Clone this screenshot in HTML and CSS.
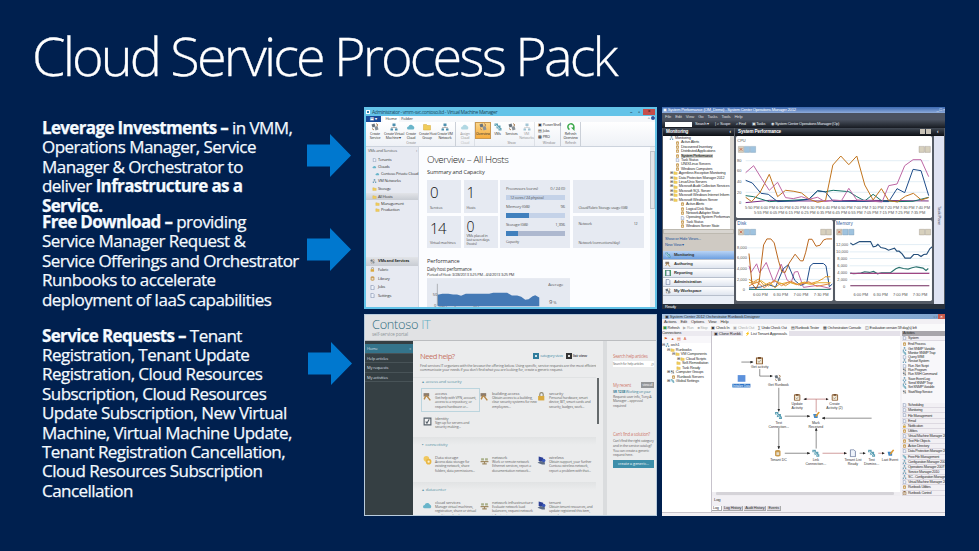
FILE: index.html
```
<!DOCTYPE html>
<html lang="en">
<head>
    <meta charset="UTF-8">
    <meta name="viewport" content="width=device-width, initial-scale=1.0">
    <title>Cloud Service Process Pack</title>
    <link rel="stylesheet" href="styles.css">
</head>
<body>
    <!-- shared icons -->
    <svg class="defs" width="0" height="0">
        <symbol id="servers" viewBox="0 0 16 16"><path d="M1 3l6-2 2 6-6 2z" fill="#68727c"/><path d="M7 8l6-2 2 7-6 2z" fill="#8b9298"/><path d="M10 1l4 3-3 2M2 11l4 3" stroke="#ad845a" stroke-width="2" fill="none"/></symbol>
        <symbol id="folder" viewBox="0 0 16 16"><path d="M1 3h6l1 2h7v9H1z" fill="#f0cc59" stroke="#d7a93a"/></symbol>
        <symbol id="cloud" viewBox="0 0 16 16"><path d="M3 13a3 3 0 0 1 0-6 5 5 0 0 1 9-1 4 4 0 0 1 1 7z" fill="#69b5ca"/></symbol>
        <symbol id="net" viewBox="0 0 16 16"><path d="M5 1h6v5H5zM1 11h5v4H1zM10 11h5v4h-5z" fill="#4c8fae"/><path d="M8 6v3M3 11V9h10v2" stroke="#777" fill="none"/></symbol>
        <symbol id="hub" viewBox="0 0 16 16"><path d="M1 10h14M8 10v4M4 14h8" stroke="#a08a62" stroke-width="2" fill="none"/><path d="M2 4h5v4H2zM9 4h5v4H9z" fill="#a9b08a"/></symbol>
        <symbol id="pc" viewBox="0 0 16 16"><path d="M3 1l8 2v7l-8-1z" fill="#2c3f96"/><path d="M1 12l5-3 8 2v4H9z" fill="#5d6c86"/><circle cx="12" cy="8" r="3" fill="#3a58b8"/></symbol>
        <symbol id="page" viewBox="0 0 16 16"><path d="M3 1h7l3 3v11H3z" fill="#eef3fb" stroke="#5f6f94" stroke-width="1.5"/></symbol>
        <symbol id="clip" viewBox="0 0 16 16"><path d="M2 3h12v12H2z" fill="#f4ead6" stroke="#86572a" stroke-width="2"/><path d="M5 1h6v4H5z" fill="#78512f"/><path d="M5 9l2 3 4-5" stroke="#666" fill="none"/></symbol>
        <symbol id="check" viewBox="0 0 16 16"><path d="M2 2h12v12H2z" fill="#f4f4f4" stroke="#56606a" stroke-width="2"/><path d="M5 8l2 3 4-7" stroke="#56606a" stroke-width="2" fill="none"/></symbol>
        <symbol id="db" viewBox="0 0 16 16"><path d="M2 3c2-3 10-3 12 0v10c-2 3-10 3-12 0z" fill="#c99b50"/><path d="M5 6h6v6H5z" fill="#e5dcca"/></symbol>
        <symbol id="disks" viewBox="0 0 16 16"><circle cx="6" cy="5" r="5" fill="#f0c860"/><circle cx="10" cy="10" r="5" fill="#e9b744"/><circle cx="10" cy="10" r="2" fill="#fbf0cf"/></symbol>
        <symbol id="refresh" viewBox="0 0 16 16"><path d="M5 13A6 6 0 1 1 12 12" fill="none" stroke="#39a849" stroke-width="3"/><path d="M8 9h7v7z" fill="#39a849"/></symbol>
        <symbol id="flow" viewBox="0 0 16 16"><path d="M1 1h7v5H1zM5 5h8v6H5zM9 10h6v5H9z" fill="#5b9fb4"/><path d="M3 3l9 10M3 9l3 4" stroke="#e4f1f4" stroke-width="1.5"/></symbol>
        <symbol id="magic" viewBox="0 0 16 16"><path d="M2 5h9v8H4z" fill="#4289c9"/><path d="M7 10l7-9" stroke="#e09b32" stroke-width="3"/></symbol>
        <symbol id="lock" viewBox="0 0 16 16"><path d="M5 7V4a3 3 0 0 1 6 0v3" fill="none" stroke="#8e876e" stroke-width="2"/><path d="M2 7h11v8H2z" fill="#d9a93e"/></symbol>
        <symbol id="key" viewBox="0 0 16 16"><path d="M1 2h10v6H1z" fill="#8c7c6c"/><path d="M6 6l7 9M5 7l-3 6" stroke="#b98a48" stroke-width="2.5"/></symbol>
        <symbol id="arrow" viewBox="0 0 44 43"><path d="M0 10.5h23V0l21 21.5L23 43V32.5H0z" fill="#0078cf"/></symbol>
    </svg>

    <div class="slide">
        <h1>Cloud Service Process Pack</h1>
        <div class="content">
            <div class="notes">
                <div class="note first">
                    <p><b>Leverage Investments –</b> in VMM,<br>Operations Manager, Service<br>Manager &amp; Orchestrator to<br>deliver <b>Infrastructure as a</b><br><b>Service.</b></p>
                    <svg class="arrow"><use href="#arrow"/></svg>
                </div>
                <div class="note second">
                    <p><b>Free Download –</b> providing<br>Service Manager Request &amp;<br>Service Offerings and Orchestrator<br>Runbooks to accelerate<br>deployment of IaaS capabilities</p>
                    <svg class="arrow"><use href="#arrow"/></svg>
                </div>
                <div class="note third">
                    <p><b>Service Requests –</b> Tenant<br>Registration, Tenant Update<br>Registration, Cloud Resources<br>Subscription, Cloud Resources<br>Update Subscription, New Virtual<br>Machine, Virtual Machine Update,<br>Tenant Registration Cancellation,<br>Cloud Resources Subscription<br>Cancellation</p>
                    <svg class="arrow"><use href="#arrow"/></svg>
                </div>
            </div>

            <div class="shots">
                <!-- Virtual Machine Manager -->
                <section class="shot vmm">
                    <div class="vmm-title"><i></i><span>Administrator - vmm-svc.contoso.ltd - Virtual Machine Manager</span><em>–</em><em>▫</em><em class="close">×</em></div>
                    <div class="vmm-tabs"><b>▤ ▾</b><span class="on">Home</span><span>Folder</span><em>^ <i></i></em></div>
                    <div class="ribbon">
                        <div class="tool w18"><svg><use href="#servers"/></svg>Create<br>Service</div>
                        <div class="tool w19"><svg><use href="#net"/></svg>Create Virtual<br>Machine ▾</div>
                        <div class="tool w16"><svg><use href="#cloud"/></svg>Create<br>Cloud<small>Create</small></div>
                        <div class="tool w16"><svg><use href="#folder"/></svg>Create Host<br>Group</div>
                        <div class="tool w21 end"><svg><use href="#net"/></svg>Create VM<br>Network</div>
                        <div class="tool w19 end dim"><svg><use href="#cloud"/></svg>Assign<br>Cloud<small>Cloud</small></div>
                        <div class="tool w16 active"><svg><use href="#servers"/></svg>Overview</div>
                        <div class="tool w12"><svg><use href="#flow"/></svg>VMs</div>
                        <div class="tool w14"><svg><use href="#servers"/></svg>Services<br>&nbsp;<small>Show</small></div>
                        <div class="tool w16 end dim"><svg><use href="#net"/></svg>VM<br>Networks</div>
                        <div class="windows w25 end"><span>▣ PowerShell</span><span>▤ Jobs</span><span>▩ PRO</span><small>Window</small></div>
                        <div class="tool w20 end"><svg><use href="#refresh"/></svg>Refresh<br>Overview<small>Refresh</small></div>
                    </div>
                    <div class="vmm-body">
                        <div class="vmm-side">
                            <div class="head">VMs and Services <span>‹</span></div>
                            <ul>
                                <li><svg><use href="#page"/></svg>Tenants</li>
                                <li><svg><use href="#cloud"/></svg>Clouds</li>
                                <li class="sub"><svg><use href="#cloud"/></svg>Contoso Private Cloud</li>
                                <li><svg><use href="#net"/></svg>VM Networks</li>
                                <li><svg><use href="#folder"/></svg>Storage</li>
                                <li class="sel"><svg><use href="#folder"/></svg>All Hosts</li>
                                <li class="sub"><svg><use href="#folder"/></svg>Management</li>
                                <li class="sub"><svg><use href="#folder"/></svg>Production</li>
                            </ul>
                            <div class="wunder">
                                <div class="sel"><svg><use href="#servers"/></svg><b>VMs and Services</b></div>
                                <div><svg><use href="#lock"/></svg>Fabric</div>
                                <div><svg><use href="#db"/></svg>Library</div>
                                <div><svg><use href="#page"/></svg>Jobs</div>
                                <div><svg><use href="#page"/></svg>Settings</div>
                            </div>
                        </div>
                        <div class="vmm-main">
                            <h2>Overview – All Hosts</h2>
                            <h3>Summary and Capacity</h3>
                            <div class="tiles">
                                <div class="tile"><strong>0</strong><span>Services</span></div>
                                <div class="tile"><strong>1</strong><span>Hosts</span></div>
                                <div class="tile capacity">
                                    <p>Processors (cores)<span>0 / 24 (0)</span></p><div class="bar"><em>12 cores / 24 physical</em></div>
                                    <p>Memory (GB)<span>96</span></p><div class="bar"><div class="used" style="width:39%"></div></div>
                                    <p>Storage (GB)<span>1,396</span></p><div class="bar gray"><div class="used" style="width:21%"></div></div>
                                    <label>Capacity</label>
                                </div>
                                <div class="tile wide"><span>Cloud/Fabric Storage usage (GB)</span></div>
                                <div class="tile"><strong>14</strong><span>Virtual machines</span></div>
                                <div class="tile last"><strong>0</strong><span>VMs placed in<br>last seven days<br>(hosts)</span></div>
                                <div class="tile wide"><p>Network<span>12</span></p><span>Network (connections/day)</span></div>
                            </div>
                            <h3 class="perf">Performance</h3>
                            <h4>Daily host performance</h4>
                            <p class="range">Period of Host: 3/28/2013 3:25 PM - 4/4/2013 3:25 PM</p>
                            <svg class="hostchart" viewBox="201 220 428 92">
                                <rect x="201" y="220" width="428" height="92" fill="#e5e9f1"/>
                                <path d="M233 270l14-3h18l14 2h12l12 4 14-6h70l12-3h42l14 8h16l12 4 12 9 10-2 12-9 8-3 12 7v26H233z" fill="#4479b5"/>
                                <path d="M232 237v65" stroke="#444" fill="none"/>
                                <text x="218" y="272">50</text><text x="222" y="305">0</text>
                                <text x="237" y="311" font-size="10">CPU performance (%)</text>
                                <text x="564" y="244">Average</text><text class="big" x="566" y="296">9</text><text x="579" y="297">%</text>
                            </svg>
                        </div>
                        <div class="vmm-scroll"><i></i></div>
                    </div>
                </section>

                <!-- Operations Manager -->
                <section class="shot om">
                    <div class="om-title"><span>▣ System Performance (OM_Demo) - System Center Operations Manager 2012</span><em>_ □ ×</em></div>
                    <div class="om-menu"><span>File</span><span>Edit</span><span>View</span><span>Go</span><span>Tasks</span><span>Tools</span><span>Help</span></div>
                    <div class="om-tools"><i></i><span>Search ▾</span><span>|&nbsp; ⌕ Scope</span><span>⌕ Find</span><span>▣ Tasks</span><span>◉ System Center Operations Manager (Op)</span></div>
                    <div class="om-body">
                        <div class="om-side">
                            <div class="om-head">Monitoring <span>‹</span></div>
                            <ul class="tree">
                                <li><svg><use href="#net"/></svg>Monitoring</li>
                                <li class="l2"><svg><use href="#db"/></svg>Active Alerts</li>
                                <li class="l2"><svg><use href="#db"/></svg>Discovered Inventory</li>
                                <li class="l2"><svg><use href="#db"/></svg>Distributed Applications</li>
                                <li class="l2"><svg><use href="#db"/></svg><mark>System Performance</mark></li>
                                <li class="l2"><svg><use href="#page"/></svg>Task Status</li>
                                <li class="l2"><svg><use href="#db"/></svg>UNIX/Linux Servers</li>
                                <li class="l2"><svg><use href="#db"/></svg>Windows Computers</li>
                                <li class="l1">⊞<svg><use href="#folder"/></svg>Agentless Exception Monitoring</li>
                                <li class="l1">⊞<svg><use href="#folder"/></svg>Data Protection Manager 2012</li>
                                <li class="l1">⊞<svg><use href="#folder"/></svg>Linux/Unix Servers</li>
                                <li class="l1">⊞<svg><use href="#folder"/></svg>Microsoft Audit Collection Services</li>
                                <li class="l1">⊞<svg><use href="#folder"/></svg>Microsoft SQL Server</li>
                                <li class="l1">⊞<svg><use href="#folder"/></svg>Microsoft Windows Internet Inform</li>
                                <li class="l1">⊟<svg><use href="#folder"/></svg>Microsoft Windows Server</li>
                                <li class="l3"><svg><use href="#db"/></svg>Active Alerts</li>
                                <li class="l3"><svg><use href="#db"/></svg>Logical Disk State</li>
                                <li class="l3"><svg><use href="#db"/></svg>Network Adapter State</li>
                                <li class="l3"><svg><use href="#page"/></svg>Operating System Performance</li>
                                <li class="l3"><svg><use href="#db"/></svg>Task Status</li>
                                <li class="l3"><svg><use href="#db"/></svg>Windows Server State</li>
                            </ul>
                            <div class="hscroll"></div>
                            <div class="links">Show or Hide Views...<br>New View ▾</div>
                            <div class="nav">
                                <div class="on"><svg><use href="#flow"/></svg>Monitoring</div>
                                <div><svg><use href="#key"/></svg>Authoring</div>
                                <div><svg class="green"><use href="#page"/></svg>Reporting</div>
                                <div><svg><use href="#page"/></svg>Administration</div>
                                <div><svg><use href="#servers"/></svg>My Workspace</div>
                            </div>
                        </div>
                        <div class="om-main">
                            <div class="om-head">System Performance <span class="btns"><i></i><i></i></span></div>
                            <svg class="cpu" viewBox="243 108 589 246">
                                <rect x="243" y="108" width="589" height="246" rx="5" fill="#fff"/>
                                <path d="M272 182h552M272 214h552M272 245h552M272 277h552" stroke="#d5e5f0" stroke-width="2"/>
                                <path d="M250 139h16v18h-16zM793 139h16v18h-16zM811 139h16v18h-16z" fill="#d7d0bd" stroke="#8c8478"/>
                                <path d="M268 139h16v18h-16zM286 139h16v18h-16z" fill="#9fc3df" stroke="#708ea6"/>
                                <path d="M254 144l8 8M262 144l-8 8" stroke="#c34b32" stroke-width="2"/>
                                <text x="247" y="125">CPU</text><text x="246" y="186">80</text><text x="246" y="217">60</text><text x="246" y="249">40</text><text x="246" y="281">20</text><text x="252" y="313">0</text>
                                <g fill="none" stroke-width="3">
                                    <path stroke="#762b83" d="M272 308l73-7 70 2 97 0 120-2 190 2"/>
                                    <path stroke="#147166" d="M272 287l23 3 48 15 119-7 26-25 24 2 23-4 47 4 24 15 24 13 25-20 25 19 48 3 47-1 47-12"/>
                                    <path stroke="#1d4b89" d="M272 241l20 8 26 31 22 3 28 22 52-2 42-5 26-26 24 4 23 28 167 1 25-39 23 12 25-70 24 4 23 75"/>
                                    <path stroke="#c1731b" d="M272 292l18 13 25-27 28-55 25 67 24-19 25 3 23 5 22 18 26 10 24-5 22-107 24-27 24 26 24-26 24 87 25 45 25-34 22 36 26 4 24-17 24-9 24 20 22-7"/>
                                    <path stroke="#bd66a4" d="M272 218l24-21 24 39 23 35 25-24 24 46 23 3 25-6 22 8 26-6 22 13 25-5 25 2 22-37 24 35 49 4 27 2 20-49 25-5 23-55 25-18h24l23 51"/>
                                </g>
                                <text x="270" y="328" textLength="556">5:50 PM 6:00 PM 6:10 PM 6:20 PM 6:30 PM 6:40 PM 6:50 PM 7:00 PM 7:10 PM 7:20 PM 7:30 PM 7:40 PM</text>
                                <text x="297" y="342" textLength="515">5:55 PM 6:05 PM 6:15 PM 6:25 PM 6:35 PM 6:45 PM 6:55 PM 7:05 PM 7:15 PM 7:25 PM 7:35 PM</text>
                            </svg>
                            <div class="pair">
                                <svg viewBox="243 47 292 244">
                                    <rect x="243" y="47" width="292" height="244" rx="5" fill="#fff"/>
                                    <path d="M278 131h250M278 162h250M278 193h250M278 226h250" stroke="#d5e5f0" stroke-width="2"/>
                                    <path d="M250 75h16v17h-16zM498 75h15v17h-15zM515 75h15v17h-15z" fill="#d7d0bd" stroke="#8c8478"/><path d="M268 75h16v17h-16zM286 75h16v17h-16z" fill="#9fc3df" stroke="#708ea6"/>
                                    <path d="M254 79l8 8M262 79l-8 8" stroke="#c34b32" stroke-width="2"/>
                                    <text class="blue" x="247" y="62">Disk</text><text x="246" y="135">8,000</text><text x="246" y="166">6,000</text><text x="246" y="197">4,000</text><text x="246" y="230">2,000</text><text x="263" y="260">0</text>
                                    <g fill="none" stroke-width="3">
                                        <path stroke="#bd66a4" d="M282 185l6 20 17-26 9 27 20-31 23 60 22-55 18 48 12 8 10-32 10-2 17 48 42-6 42 10"/>
                                        <path stroke="#1d4b89" d="M282 252l35-3 22-8 23 8 23-55 15-12 20 47 18 15 18-8 10-50 9-8h31l8 7 10 63 9-8"/>
                                        <path stroke="#147166" d="M282 256h246"/>
                                        <path stroke="#e39b2c" d="M282 226l13 8 16-9 16 19 18-9 15 16 18-14 14 8 16-10 19 6 22-7 20 4 20-6 16-8 6-6h16"/>
                                        <path stroke="#e2ac2c" d="M282 235l17 3 20-8 22 16 18-17 21 10 22-5 24 8 16-7 26 6 22-5 38 0"/>
                                        <path stroke="#e3843e" d="M282 246l22-13 24 18 30-22 22 16 28-14 24 12 30-10 24 14 40-8"/>
                                        <path stroke="#ba671d" d="M282 148l9 90 12 17 9-18 14-115 10-18h12l10 12 13 54 10 33 10 2 12-28 18-27 16 20h8l8-26 9-39h10l12 21 12-3 11-16 9-3h16"/>
                                    </g>
                                    <text x="294" y="276" textLength="228">6:00 PM &#160; &#160; 6:30 PM &#160; &#160; 7:00 PM &#160; &#160; 7:30 PM</text>
                                </svg>
                                <svg viewBox="540 47 292 244">
                                    <rect x="540" y="47" width="292" height="244" rx="5" fill="#fff"/>
                                    <path d="M584 121h242M584 163h242M584 206h242M584 143h242M584 185h242M584 227h242" stroke="#d5e5f0" stroke-width="2"/>
                                    <path d="M545 75h16v17h-16zM794 75h16v17h-16zM812 75h16v17h-16z" fill="#d7d0bd" stroke="#8c8478"/><path d="M563 75h16v17h-16zM581 75h16v17h-16z" fill="#9fc3df" stroke="#708ea6"/>
                                    <path d="M549 79l8 8M557 79l-8 8" stroke="#c34b32" stroke-width="2"/>
                                    <text class="blue" x="543" y="62">Memory</text><text x="543" y="125">12,000</text><text x="543" y="146">10,000</text><text x="547" y="167">8,000</text><text x="547" y="189">6,000</text><text x="547" y="210">4,000</text><text x="547" y="231">2,000</text><text x="564" y="252">0</text>
                                    <g fill="none" stroke-width="3.5"><path stroke="#254f7b" d="M586 116l8 6 10-5 10-5h33l8 16 8-2 6-6 9 10 14 3 9 5 18-6 7 9h7l9 8 9 13h16l10-11 13 0 9 6 8-6 9-1 10-17 9-7"/><path stroke="#2b726f" d="M586 207l10 2 22-2 11-4 15 2 12-3 12 7 12-3h27l16-12 10-4 13 3 14 2 12-4 13-3 20 4 9 7 7-6"/><path stroke="#a04682" d="M586 208h238"/><path stroke="#6f285c" d="M586 245h238"/></g>
                                    <text x="596" y="276" textLength="222">6:00 PM &#160; &#160; 6:30 PM &#160; &#160; 7:00 PM &#160; &#160; 7:30 PM</text>
                                </svg>
                            </div>
                        </div>
                        <div class="om-task"><div class="om-head">‹</div><span>Task Pane</span></div>
                    </div>
                    <div class="om-status">Ready</div>
                </section>

                <!-- self-service portal -->
                <section class="shot portal">
                    <header><h2>Contoso <span>IT</span></h2><p>self-service portal</p></header>
                    <div class="portal-body">
                        <nav><a class="on">Home<span>»</span></a><a>Help articles</a><a>My requests</a><a>My activities</a></nav>
                        <div class="help">
                            <div class="help-head"><h3>Need help?</h3><i class="cat"></i><span>category view</span><i class="list"></i><b>list view</b></div>
                            <p class="intro">Find services IT organizes with the browse the offering below. Using specific, service requests are the most efficient way to<br>communicate your needs if you don't find what you are looking for, create a generic request.</p>
                            <div class="group g1"><h4>▴ &nbsp;access and security</h4>
                                <div class="cards">
                                    <div class="card boxed"><svg><use href="#key"/></svg><p><b>access</b>Get help with VPN, account,<br>access to a repository, or<br>request hardware or...</p></div>
                                    <div class="card"><svg><use href="#key"/></svg><p><b>building access</b>Obtain access to a building,<br>clear security systems for new<br>employees...</p></div>
                                    <div class="card"><svg><use href="#lock"/></svg><p><b>security</b>Personal hardware, smart<br>device, BIT, smart cards and<br>security, badges, work...</p></div>
                                    <div class="card"><svg><use href="#check"/></svg><p><b>identity</b>Sign up for servers and<br>security making...</p></div>
                                </div>
                            </div>
                            <div class="group g2"><h4>▪ &nbsp;connectivity</h4>
                                <div class="cards">
                                    <div class="card"><svg><use href="#disks"/></svg><p><b>Data storage</b>Access data storage for<br>existing network, share<br>folders, data permissions...</p></div>
                                    <div class="card"><svg><use href="#hub"/></svg><p><b>network</b>Work or remote network<br>Ethernet services, report a<br>documentation network...</p></div>
                                    <div class="card"><svg><use href="#pc"/></svg><p><b>wireless</b>Obtain support, your further<br>Contoso wireless network,<br>report a problem with that...</p></div>
                                </div>
                            </div>
                            <div class="group g3"><h4>▴ &nbsp;datacenter</h4>
                                <div class="cards">
                                    <div class="card"><svg><use href="#cloud"/></svg><p><b>cloud services</b>Manage virtual machines,<br>registration, share or virtual<br>machines, cloud...</p></div>
                                    <div class="card"><svg><use href="#hub"/></svg><p><b>network infrastructure</b>Evaluate network load<br>balancers, request network<br>infrastructure...</p></div>
                                    <div class="card"><svg><use href="#pc"/></svg><p><b>tenant</b>Obtain tenant resources, and<br>update registered this item,<br>cancel...</p></div>
                                </div>
                            </div>
                        </div>
                        <div class="pscroll"><i></i></div>
                        <aside>
                            <h3>Search help articles</h3>
                            <div class="search">Search for help articles <span>⌕</span></div>
                            <h3 class="mine">My recent <span>view all</span></h3>
                            <p><b>SR 1238</b> <em>Working on your</em><br>Request: user info, Tony A<br>Manager – approval<br>required</p>
                            <h3 class="find">Can't find a solution?</h3>
                            <p>Can't find the right category<br>and in the service catalog?<br>You can create a generic<br>request here.</p>
                            <button>create a generic...</button>
                        </aside>
                    </div>
                </section>

                <!-- Orchestrator runbook designer -->
                <section class="shot orch">
                    <div class="or-title"><span>▣ System Center 2012 Orchestrator Runbook Designer</span><em>▫ ▫ <b>×</b></em></div>
                    <div class="or-menu"><span>Actions</span><span>Edit</span><span>Options</span><span>View</span><span>Help</span></div>
                    <div class="or-tools"><span><b class="g">▣</b> Refresh</span><span class="d">▶ Run</span><span class="d">■ Stop</span><span>▣ Check In</span><span class="d">▣ Check Out</span><span>∑ Undo Check Out</span><span>▤ Runbook Tester</span><span>▦ Orchestration Console</span><span>◫ Evaluation version 59 day(s) left</span></div>
                    <div class="or-body">
                        <div class="or-tree">
                            <div class="cap">Connections</div>
                            <div class="mini">⚑ <b>▲</b> ▤ A</div>
                            <ul>
                                <li>⊟<svg><use href="#net"/></svg>orch1</li>
                                <li class="l1">⊟<svg><use href="#folder"/></svg>Runbooks</li>
                                <li class="l2">⊟<svg><use href="#folder"/></svg>VM Components</li>
                                <li class="l3">⊞<svg><use href="#folder"/></svg>Cloud Scripts</li>
                                <li class="l2 n"><svg><use href="#folder"/></svg>Self-Remediation</li>
                                <li class="l2 n"><svg><use href="#folder"/></svg>Task Ready</li>
                                <li class="l1">⊞<svg><use href="#servers"/></svg>Computer Groups</li>
                                <li class="l1 s"><svg><use href="#db"/></svg>Runbook Servers</li>
                                <li class="l1">⊞<svg><use href="#flow"/></svg>Global Settings</li>
                            </ul>
                        </div>
                        <div class="or-center">
                            <div class="or-tabs"><span>▣ Clone Runbk</span><span class="on">⚡ List Tenant Approvals</span></div>
                            <svg class="runbook" viewBox="170 85 563 467">
                                <defs><marker id="ah" markerWidth="10" markerHeight="10" refX="8" refY="4" orient="auto" markerUnits="userSpaceOnUse"><path d="M0 0l9 4-9 4z" fill="#222"/></marker></defs>
                                <rect x="170" y="85" width="563" height="467" fill="#fff"/>
                                <g stroke="#444" stroke-width="1.8" fill="none">
                                    <path marker-end="url(#ah)" d="M258 163h35"/><path d="M313 184v21h30"/><path marker-end="url(#ah)" d="M343 205h8"/><path marker-end="url(#ah)" d="M370 240v71"/><path marker-end="url(#ah)" d="M388 325h75"/><path marker-end="url(#ah)" d="M648 331H500"/><path marker-end="url(#ah)" d="M370 360v63"/><path marker-end="url(#ah)" d="M388 436h75"/><path marker-end="url(#ah)" d="M482 422v-61"/><path marker-end="url(#ah)" d="M612 436h17"/>
                                    <g stroke="#b35c5c"><path marker-end="url(#ah)" d="M482 313v-39h-37"/><path marker-end="url(#ah)" d="M482 274h36"/><path marker-end="url(#ah)" d="M501 436h72"/><path marker-end="url(#ah)" d="M668 436h18"/></g>
                                </g>
                                <use href="#clip" x="300" y="146" width="24" height="24"/><text x="313" y="180">Get activity</text>
                                <rect x="247" y="202" width="23" height="20" fill="#5c91dc"/><rect x="231" y="228" width="54" height="11" fill="#2b73c6"/><text class="inv" x="258" y="237">Initialize Data</text>
                                <use href="#servers" x="356" y="200" width="22" height="22"/><text x="369" y="235">Get Runbook</text>
                                <use href="#clip" x="414" y="257" width="22" height="22"/><text x="425" y="291">Update</text><text x="425" y="303">Activity</text>
                                <use href="#clip" x="527" y="257" width="22" height="22"/><text x="537" y="291">Create</text><text x="537" y="303">Activity (2)</text>
                                <use href="#flow" x="357" y="311" width="24" height="24"/><text x="370" y="347">Test</text><text x="370" y="359">Connection...</text>
                                <use href="#magic" x="470" y="311" width="24" height="24"/><text x="481" y="347">Mark</text><text x="481" y="359">Received</text>
                                <use href="#db" x="356" y="424" width="22" height="24"/><text x="369" y="459">Tenant DC</text>
                                <use href="#flow" x="469" y="424" width="24" height="24"/><text x="481" y="459">Link</text><text x="481" y="470">Connection...</text>
                                <use href="#page" x="580" y="424" width="24" height="24"/><text x="592" y="459">Tenant List</text><text x="592" y="470">Ready</text>
                                <use href="#flow" x="636" y="424" width="24" height="24"/><text x="648" y="459">Test</text><text x="648" y="470">Dismiss...</text>
                                <use href="#magic" x="693" y="424" width="24" height="24"/><text x="703" y="459">Last Event</text>
                            </svg>
                            <div class="or-scroll"><i></i></div>
                            <div class="or-log">Log</div>
                            <div class="or-logtabs"><span class="on">Log</span><span>Log History</span><span>Audit History</span><span>Events</span></div>
                        </div>
                        <div class="or-acts">
                            <div class="cap">Activities</div>
                            <ul>
                                <li><svg><use href="#page"/></svg>System</li>
                            </ul>
                            <ul class="open">
                                <li><svg><use href="#db"/></svg>End Process</li>
                                <li><svg><use href="#net"/></svg>Get SNMP Variable</li>
                                <li><svg><use href="#flow"/></svg>Monitor SNMP Trap</li>
                                <li><svg><use href="#page"/></svg>Query WMI</li>
                                <li><svg><use href="#net"/></svg>Restart System</li>
                                <li><svg><use href="#page"/></svg>Run .Net Script</li>
                                <li><svg><use href="#servers"/></svg>Run Program</li>
                                <li><svg><use href="#servers"/></svg>Run SSH Command</li>
                                <li><svg><use href="#net"/></svg>Save Event Log</li>
                                <li><svg><use href="#net"/></svg>Send SNMP Trap</li>
                                <li><svg><use href="#flow"/></svg>Set SNMP Variable</li>
                                <li><svg><use href="#servers"/></svg>Start/Stop Service</li>
                            </ul>
                            <ul class="groups">
                                <li><svg><use href="#page"/></svg>Scheduling</li>
                                <li><svg><use href="#page"/></svg>Monitoring</li>
                                <li><svg><use href="#page"/></svg>File Management</li>
                                <li><svg><use href="#page"/></svg>Email</li>
                                <li><svg><use href="#lock"/></svg>Notification</li>
                                <li><svg><use href="#db"/></svg>Utilities</li>
                                <li><svg><use href="#page"/></svg>Virtual Machine Manager 2008</li>
                                <li><svg><use href="#db"/></svg>Text File Objects</li>
                                <li><svg><use href="#db"/></svg>Active Directory</li>
                                <li><svg><use href="#page"/></svg>Data Protection Manager 2012</li>
                                <li><svg><use href="#flow"/></svg>Free File Management</li>
                                <li><svg><use href="#net"/></svg>Configuration Manager 2007</li>
                                <li><svg><use href="#net"/></svg>Operations Manager 2007 R2</li>
                                <li><svg><use href="#net"/></svg>Service Manager 2010</li>
                                <li><svg><use href="#net"/></svg>SC - Configuration Manager</li>
                                <li><svg><use href="#page"/></svg>Virtual Machine Manager 2012</li>
                                <li><svg><use href="#db"/></svg>Runbook Utilities</li>
                                <li><svg><use href="#clip"/></svg>Runbook Control</li>
                            </ul>
                        </div>
                    </div>
                    <div class="or-status"></div>
                </section>
            </div>
        </div>
    </div>
</body>
</html>
```
FILE: styles.css
```
* {
    box-sizing: border-box;
}
body {
    margin: 0;
    background: #00204f;
    font-family: "Open Sans", "Noto Sans", sans-serif;
}
h1, h2, h3, h4, p, ul {
    margin: 0;
    padding: 0;
    font-weight: normal;
}
ul {
    list-style: none;
}
i, em {
    font-style: normal;
}
.defs {
    display: block;
}
.slide {
    width: 979px;
    height: 551px;
    overflow: hidden;
    background: #00204f;
}
.slide h1 {
    height: 107px;
    padding: 20px 0 0 32px;
    font-size: 54px;
    line-height: 70px;
    font-weight: 300;
    letter-spacing: -2.85px;
    color: #fff;
    -webkit-text-stroke: 0.3px #fff;
    white-space: nowrap;
}
.content {
    display: flex;
}
.notes {
    width: 364px;
    padding: 11px 0 0 42px;
    color: #f4faff;
}
.note {
    display: flex;
    align-items: flex-start;
}
.note p {
    width: 265px;
    font-size: 17px;
    line-height: 19.4px;
    letter-spacing: -0.54px;
    -webkit-text-stroke: 0.25px #f4faff;
    white-space: nowrap;
}
.note b {
    letter-spacing: -0.65px;
}
.first {
    height: 94px;
}
.second {
    height: 113.5px;
}
.arrow {
    width: 44px;
    height: 43px;
    margin-top: 16px;
    flex: none;
}
.third .arrow {
    margin-left: 1px;
}

/* product windows */
.shots {
    display: grid;
    grid-template-columns: 293px 283px;
    grid-template-rows: 202px 202px;
    gap: 5px;
}
.shot {
    overflow: hidden;
    display: flex;
    flex-direction: column;
    white-space: nowrap;
    font-size: 5px;
    line-height: 6px;
    letter-spacing: -0.15px;
    color: #333;
}
.shot svg text {
    fill: #555;
    font-size: 12px;
    letter-spacing: 0;
}
.shot li svg {
    width: 5px;
    height: 4px;
    flex: none;
    margin-right: 1px;
}
.shot li {
    display: flex;
    align-items: center;
}

/* Virtual Machine Manager */
.vmm {
    background: #63c3e8;
    padding: 0 2px 2px;
}
.vmm-title {
    height: 9px;
    display: flex;
    align-items: center;
    font-size: 5px;
    letter-spacing: -0.36px;
    color: #20495c;
}
.vmm-title i {
    width: 4px;
    height: 4px;
    border: 1px solid #fff;
    background: #357fae;
    margin-right: 2px;
}
.vmm-title span {
    flex: 1;
}
.vmm-title em {
    width: 8px;
    text-align: center;
    color: #111;
}
.vmm-title .close {
    width: 12px;
    height: 6px;
    line-height: 5px;
    background: #c64e4b;
}
.vmm-tabs {
    display: flex;
    height: 6px;
    background: #f5f7fa;
    font-size: 4.2px;
}
.vmm-tabs b {
    width: 15px;
    background: #194a98;
    color: #fff;
    text-align: center;
    font-size: 4px;
}
.vmm-tabs span {
    width: 16px;
    text-align: center;
}
.vmm-tabs .on {
    margin-left: 2px;
    background: #fff;
}
.vmm-tabs em {
    margin-left: auto;
}
.vmm-tabs em i {
    display: inline-block;
    width: 4px;
    height: 4px;
    border-radius: 2px;
    background: #294f9b;
}
.ribbon {
    display: flex;
    height: 25px;
    background: linear-gradient(#fff, #eef1f6);
    border-bottom: 1px solid #ccd3dd;
    flex: none;
}
.tool {
    height: 24px;
    padding-top: 1px;
    text-align: center;
    font-size: 3.6px;
    line-height: 4px;
    letter-spacing: -0.2px;
}
.tool svg {
    display: block;
    width: 8px;
    height: 8px;
    margin: 0 auto 1px;
}
.tool small, .windows small {
    display: block;
    font-size: 3.5px;
    line-height: 5px;
    color: #888;
}
.tool.active {
    height: 17px;
    background: linear-gradient(#fbd88e, #f6a938);
    outline: 1px solid #cb9950;
    outline-offset: -1px;
}
.dim {
    opacity: .5;
}
.end {
    border-right: 1px solid #cbd0d8;
}
.w12 { width: 13px; }
.w14 { width: 15px; }
.w16 { width: 16px; }
.w18 { width: 18px; }
.w19 { width: 19px; }
.w20 { width: 20px; }
.w21 { width: 21px; }
.w25 { width: 25px; }
.windows {
    margin-left: 1px;
    font-size: 3.8px;
    line-height: 6px;
    padding-left: 2px;
}
.windows span {
    display: block;
}
.windows small {
    text-align: center;
}
.vmm-body {
    flex: 1;
    display: flex;
    min-height: 0;
    background: #fcfdff;
}
.vmm-side {
    width: 53px;
    background: #e7eaf2;
    border-right: 1px solid #d5dae4;
    display: flex;
    flex-direction: column;
    font-size: 4px;
    letter-spacing: -0.2px;
}
.vmm-side .head {
    height: 9px;
    padding: 1px 1px 0 2px;
    display: flex;
    justify-content: space-between;
    color: #555;
}
.vmm-side li {
    height: 7.6px;
    padding-left: 6px;
}
.vmm-side li.sub {
    padding-left: 9px;
    height: 6.5px;
}
.vmm-side .sel {
    background: linear-gradient(#e2e4e8, #c8ccd3);
}
.wunder {
    margin-top: auto;
    padding-bottom: 7px;
}
.wunder div {
    display: flex;
    align-items: center;
    height: 8.6px;
    padding-left: 4px;
}
.wunder svg {
    width: 5px;
    height: 5px;
    margin-right: 3px;
}
.vmm-main {
    width: 230px;
    padding: 6px 0 0 8px;
    overflow: hidden;
}
.vmm-main h2 {
    font-size: 9.8px;
    line-height: 13px;
    letter-spacing: -0.35px;
    font-weight: 300;
    color: #222;
}
.vmm-main h3 {
    font-size: 5.6px;
    line-height: 8px;
    height: 14px;
    padding-top: 2px;
    letter-spacing: -0.12px;
}
.tiles {
    display: grid;
    grid-template-columns: 34px 34px 70px 71px;
    grid-template-rows: 33px 32px;
    gap: 2.5px;
}
.tile {
    background: #e6eaf2;
    padding: 4px 3px 3px;
    display: flex;
    flex-direction: column;
    justify-content: space-between;
    font-size: 3.7px;
    line-height: 4px;
    letter-spacing: -0.2px;
    color: #555;
}
.tile strong {
    font-size: 15px;
    line-height: 17px;
    font-weight: 300;
    color: #111;
    letter-spacing: -0.5px;
}
.tile.last {
    padding: 3px 3px 2px;
}
.tile.last strong {
    line-height: 15px;
    font-size: 14px;
}
.tile.wide {
    justify-content: flex-end;
    padding-left: 6px;
}
.tile.wide p {
    display: flex;
    justify-content: space-between;
    padding: 2px 3px 0 0;
    margin-bottom: auto;
}
.capacity {
    grid-row: span 2;
    padding: 7px 5px 3px 6px;
}
.capacity p {
    display: flex;
    justify-content: space-between;
    font-size: 4.2px;
}
.bar {
    height: 5px;
    background: #c4d2e8;
}
.bar.gray {
    background: #adb8cf;
}
.bar em {
    display: block;
    padding-left: 4px;
    line-height: 5px;
    font-size: 3.8px;
}
.used {
    height: 5px;
    background: #4180bd;
}
.vmm-main h3.perf {
    margin-top: 6px;
    height: 13px;
    padding-top: 3px;
}
.vmm-main h4 {
    font-size: 4.4px;
    line-height: 5px;
}
.range {
    font-size: 4px;
    line-height: 5px;
    letter-spacing: -0.24px;
    margin-bottom: 1px;
}
.hostchart {
    display: block;
    width: 143px;
    height: 31px;
}
.shot .hostchart text.big {
    font-size: 18px;
}
.vmm-scroll {
    width: 5px;
    margin-left: auto;
    background: #eceef1;
}
.vmm-scroll i {
    display: block;
    height: 58px;
    margin-top: 4px;
    border: 1px solid #bfc2c8;
    background: #e2e4e8;
}

/* Operations Manager */
.om {
    background: #2d343e;
    font-family: "Liberation Sans", sans-serif;
}
.om-title {
    height: 6px;
    display: flex;
    justify-content: space-between;
    background: linear-gradient(#3c69b1, #8facda);
    color: #fff;
    padding-left: 1px;
    font-size: 4.2px;
    letter-spacing: -0.24px;
}
.om-menu {
    height: 7px;
    display: flex;
    gap: 4px;
    padding: 1px 3px;
    background: #4b5260;
    color: #ddd;
    font-size: 4.2px;
    line-height: 5px;
}
.om-tools {
    height: 8px;
    display: flex;
    align-items: center;
    gap: 6px;
    padding-left: 3px;
    background: linear-gradient(#49505d, #171b22);
    color: #e4e8ee;
    font-size: 4px;
    letter-spacing: -0.24px;
}
.om-tools i {
    width: 27px;
    height: 5px;
    background: #fff;
    margin-right: -3px;
}
.om-body {
    flex: 1;
    display: flex;
    min-height: 0;
    background: #555b65;
}
.om-head {
    height: 8px;
    display: flex;
    justify-content: space-between;
    padding: 1px 3px 0;
    background: linear-gradient(#434a55, #0c0f14);
    color: #fff;
    font-size: 4.6px;
    font-weight: bold;
}
.om-side {
    width: 71px;
    margin-left: 1px;
    display: flex;
    flex-direction: column;
    background: #e9eef6;
}
.tree {
    height: 93px;
    background: #fff;
    border-right: 4px solid #d8d5d0;
    overflow: hidden;
    font-size: 3.8px;
    line-height: 4.4px;
    letter-spacing: -0.22px;
}
.tree li {
    height: 4.42px;
    padding-left: 6px;
}
.tree li.l1 { padding-left: 7px; }
.tree li.l2 { padding-left: 12px; }
.tree li.l3 { padding-left: 17px; }
.tree mark {
    background: #cfcfcb;
}
.hscroll {
    height: 5px;
    background: #d8d5d0;
    border: 1px solid #bdb9b0;
}
.links {
    height: 17px;
    padding: 2px 2px 0;
    background: #cfcac3;
    color: #27569c;
    font-size: 4px;
    line-height: 5.5px;
}
.nav div {
    height: 9px;
    display: flex;
    align-items: center;
    border-bottom: 1px solid #b7bfcc;
    background: linear-gradient(#fff, #dfe5ef);
    font-weight: bold;
    font-size: 4.2px;
}
.nav div.on {
    background: linear-gradient(#b9d3f5, #6d9fe0);
}
.nav svg {
    width: 6px;
    height: 6px;
    margin: 0 3px 0 2px;
}
.nav .green {
    background: #48a264;
}
.om-main {
    width: 199px;
    margin-left: 1px;
}
.om-main > svg, .pair svg {
    display: block;
}
.btns {
    display: flex;
    gap: 1px;
}
.btns i {
    width: 5px;
    height: 5px;
    background: #c8c2b7;
}
.cpu {
    width: 196px;
    height: 82px;
    margin-left: 1px;
}
.pair {
    display: flex;
    gap: 2px;
    margin: 2px 0 0 1px;
}
.pair svg {
    width: 97px;
    height: 81px;
}
.shot .pair text.blue {
    fill: #35609b;
    font-size: 14px;
}
.om-task {
    flex: 1;
    background: #dfe3f2;
    display: flex;
    flex-direction: column;
    align-items: center;
    margin-right: 1px;
}
.om-task .om-head {
    width: 100%;
}
.om-task span {
    writing-mode: vertical-rl;
    margin-top: 70px;
    font-size: 4.4px;
    color: #4b5068;
}
.om-status {
    height: 5px;
    padding-left: 3px;
    line-height: 5px;
    font-size: 4px;
    color: #fff;
    background: #29313c;
}

/* self-service portal */
.portal {
    background: #ebeced;
    border: 1px solid #b9ccdc;
    color: #666;
}
.portal header {
    height: 26px;
    padding: 2px 0 0 7px;
    background: #e1e2e4;
    border-bottom: 1px solid #bbbdc0;
    flex: none;
}
.portal h2 {
    font-size: 12.8px;
    line-height: 15px;
    font-weight: 300;
    letter-spacing: -0.3px;
    color: #326d7f;
}
.portal h2 span {
    color: #5dadc1;
}
.portal header p {
    font-size: 4.5px;
    line-height: 5px;
    letter-spacing: -0.05px;
    color: #8a9296;
}
.portal-body {
    flex: 1;
    display: flex;
    min-height: 0;
}
.portal nav {
    width: 48px;
    padding-top: 3px;
    background: #353f43;
    color: #d9dfe1;
}
.portal nav a {
    display: flex;
    justify-content: space-between;
    height: 9.6px;
    line-height: 9px;
    padding: 0 2px;
    border-bottom: 1px solid #485357;
    font-size: 4px;
}
.portal nav .on {
    background: #34748b;
}
.help {
    width: 183px;
    overflow: hidden;
}
.help-head {
    display: flex;
    align-items: center;
    height: 23px;
    padding: 7px 9px 0 7px;
    font-size: 4px;
    letter-spacing: -0.24px;
}
.help-head h3 {
    flex: 1;
    font-size: 7.6px;
    line-height: 10px;
    letter-spacing: -0.5px;
    color: #c77566;
}
.help-head i {
    width: 6px;
    height: 6px;
    border: 1px solid #307d9d;
    background: #d5e6ec;
    outline: 1px solid #307d9d;
    outline-offset: -2px;
    margin-right: 1px;
}
.help-head .list {
    background: #ddd;
    border-color: #333;
    outline-color: #333;
    margin-left: 3px;
}
.help-head span {
    color: #3e8aa5;
}
.intro {
    height: 13px;
    padding-left: 7px;
    font-size: 3.6px;
    line-height: 4.4px;
    letter-spacing: -0.13px;
}
.group {
    padding-left: 9px;
}
.group h4 {
    color: #5c95a7;
    font-size: 4.3px;
    line-height: 6px;
    height: 11px;
}
.g1 {
    height: 60px;
    border-top: 1px solid #e0e2e3;
}
.g2, .g3 {
    height: 45px;
    padding-top: 4px;
    background: linear-gradient(#e1e3e4, #ebeced 8px);
}
.g2 h4, .g3 h4 {
    height: 12px;
}
.cards {
    display: grid;
    grid-template-columns: 57px 57px 57px;
    row-gap: 3px;
}
.card {
    display: flex;
    height: 22px;
    padding-top: 2px;
    font-size: 3.5px;
    line-height: 4.4px;
}
.card svg {
    width: 9px;
    height: 9px;
    margin: 1px 3px 0 1px;
    flex: none;
}
.card b {
    display: block;
    font-size: 4.2px;
    line-height: 5px;
    font-weight: normal;
}
.boxed {
    outline: 1px solid #bcd5de;
}
.pscroll {
    width: 11px;
    border-right: 4px solid #dadcde;
    padding: 37px 0 0 1px;
}
.pscroll i {
    display: block;
    width: 2px;
    height: 46px;
    background: #656a6c;
}
.portal aside {
    padding: 12px 0 0 6px;
    width: 48px;
    font-size: 3.6px;
    line-height: 4.6px;
    letter-spacing: -0.2px;
}
.portal aside h3 {
    color: #cf7b6d;
    font-size: 4.4px;
    line-height: 6px;
    letter-spacing: -0.26px;
}
.search {
    width: 41px;
    height: 6px;
    margin-top: 2px;
    display: flex;
    justify-content: space-between;
    background: #fff;
    font-size: 3.3px;
    line-height: 6px;
}
.search span {
    font-size: 6px;
}
.portal aside .mine {
    width: 41px;
    margin: 15px 0 2px;
    display: flex;
    justify-content: space-between;
}
.mine span {
    width: 13px;
    background: #949698;
    color: #fff;
    font-size: 3.5px;
    text-align: center;
}
.portal aside b, .portal aside em {
    color: #3d8297;
}
.portal aside .find {
    margin: 23px 0 2px;
}
.portal button {
    display: block;
    width: 41px;
    height: 8px;
    margin-top: 2px;
    padding: 0;
    border: 0;
    background: #3d8eaa;
    color: #fff;
    font: 3.8px "Open Sans", sans-serif;
}

/* Orchestrator */
.orch {
    background: #f2f0f4;
    font-family: "Liberation Sans", sans-serif;
    font-size: 4.2px;
    letter-spacing: -0.18px;
}
.or-title {
    height: 5px;
    display: flex;
    justify-content: space-between;
    padding-left: 3px;
    background: linear-gradient(90deg, #b0c9e6, #7fa5cf);
    line-height: 5px;
}
.or-title b {
    display: inline-block;
    width: 7px;
    background: #c85a4c;
    color: #fff;
    text-align: center;
}
.or-menu {
    height: 5px;
    display: flex;
    gap: 4px;
    padding-left: 2px;
    line-height: 5px;
}
.or-tools {
    height: 7px;
    display: flex;
    align-items: center;
    gap: 4px;
    padding-left: 1px;
    background: #fafafb;
    font-size: 3.9px;
    letter-spacing: -0.25px;
}
.or-tools .g {
    color: #399642;
}
.or-tools .d {
    color: #aaa;
}
.or-body {
    flex: 1;
    display: flex;
    min-height: 0;
}
.or-tree {
    width: 50px;
    background: #fff;
    border-right: 1px solid #c7c3cc;
    font-size: 3.8px;
}
.cap {
    height: 5px;
    background: #eceaf0;
    line-height: 5px;
}
.mini {
    height: 7px;
    padding-left: 2px;
    color: #d65e31;
    background: #f8f7fa;
    word-spacing: 2px;
}
.or-tree li {
    height: 4.5px;
}
.or-tree .l1 { padding-left: 5px; }
.or-tree .l2 { padding-left: 10px; }
.or-tree .l3 { padding-left: 15px; }
.or-tree .n { padding-left: 14px; }
.or-tree .s { padding-left: 9px; }
.or-center {
    width: 188px;
    display: flex;
    flex-direction: column;
}
.or-tabs {
    height: 5px;
    display: flex;
    line-height: 5px;
    background: #e4e1e9;
}
.or-tabs span {
    padding: 0 2px;
}
.or-tabs .on {
    background: #fff;
}
.runbook {
    display: block;
    width: 188px;
    height: 156px;
    flex: none;
}
.shot .runbook text {
    text-anchor: middle;
    font-size: 10.5px;
    fill: #333;
}
.shot .runbook text.inv {
    font-size: 8.5px;
    fill: #fff;
}
.or-scroll {
    height: 4px;
    padding: 0 4px;
    background: #efedf1;
}
.or-scroll i {
    display: block;
    width: 178px;
    height: 3px;
    background: #d5d3d8;
    border-radius: 1px;
}
.or-log {
    height: 10px;
    padding: 1px 2px;
}
.or-logtabs {
    display: flex;
    height: 5px;
    gap: 1px;
    line-height: 5px;
    font-size: 3.8px;
}
.or-logtabs span {
    background: #dcd8df;
    border: solid #aaa;
    border-width: 0 1px 1px 0;
    padding: 0 1px;
}
.or-logtabs .on {
    background: #fff;
    width: 10px;
}
.or-acts {
    flex: 1;
    min-width: 0;
    overflow: hidden;
    padding-left: 2px;
    font-size: 3.7px;
    letter-spacing: -0.3px;
}
.or-acts .cap {
    background: #a7a5aa;
    padding-left: 1px;
}
.or-acts li {
    height: 5.15px;
    border-bottom: 1px solid #ddd9e1;
}
.or-acts .open {
    height: 62px;
    background: #f8f7fa;
    padding-top: 1px;
}
.or-acts .open li {
    height: 4.3px;
    border: 0;
}
.or-status {
    height: 4px;
    border-top: 1px solid #c9c5cc;
}
```
